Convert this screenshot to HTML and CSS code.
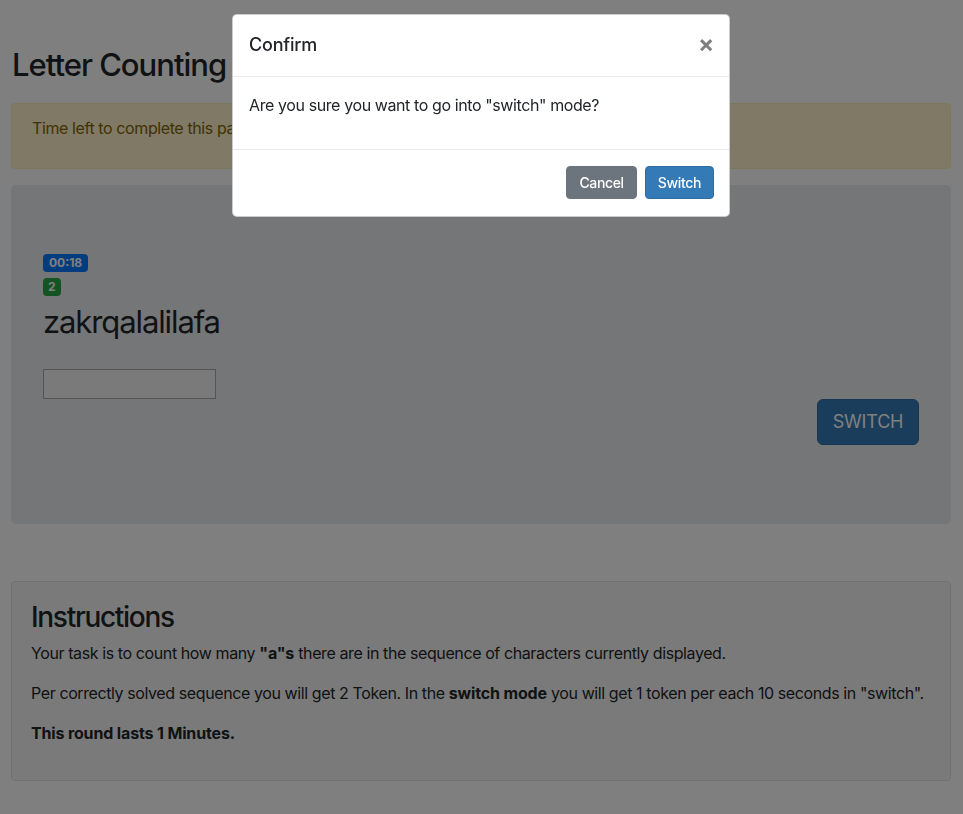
FILE: index.html
```html
<!DOCTYPE html>
<html lang="en">
<head>
<meta charset="utf-8">
<title>Letter Counting</title>
<link rel="stylesheet" href="styles.css">
</head>
<body>
<div class="page">
  <h1 class="title">Letter Counting</h1>
  <div class="alert">
    <p>Time left to complete this page: <span class="countdown">0:41</span></p>
  </div>
  <div class="jumbotron">
    <div class="task">
      <div class="task-main">
        <div class="badge-row"><span class="badge badge-blue">00:18</span></div>
        <div class="badge-row"><span class="badge badge-green">2</span></div>
        <div class="sequence">zakrqalalilafa</div>
        <input class="answer" type="text">
      </div>
      <div class="task-side">
        <button class="btn-switch-lg">SWITCH</button>
      </div>
    </div>
  </div>
  <div class="well">
    <h2 class="well-title">Instructions</h2>
    <p>Your task is to count how many <b>"a"s</b> there are in the sequence of characters currently displayed.</p>
    <p class="one-line">Per correctly solved sequence you will get 2 Token. In the <b>switch mode</b> you will get 1 token per each 10 seconds in "switch".</p>
    <p><b>This round lasts 1 Minutes.</b></p>
  </div>
</div>

<div class="backdrop"></div>
<div class="modal-wrap">
  <div class="modal">
    <div class="modal-header">
      <h5 class="modal-title">Confirm</h5>
      <span class="close">&times;</span>
    </div>
    <div class="modal-body">
      <p>Are you sure you want to go into "switch" mode?</p>
    </div>
    <div class="modal-footer">
      <button class="btn btn-secondary">Cancel</button>
      <button class="btn btn-primary">Switch</button>
    </div>
  </div>
</div>
</body>
</html>
```

FILE: styles.css
```css
* { box-sizing: border-box; }
html, body { margin: 0; padding: 0; }
body {
  font-family: Inter, "Noto Sans", sans-serif;
  font-size: 16px;
  line-height: 1.5;
  letter-spacing: -0.4px;
  color: #212529;
  background: #fff;
  width: 963px;
  height: 814px;
  overflow: hidden;
}
.page {
  padding: 46px 12px 0 11px;
}
.title {
  margin: 0 0 20px 1px;
  font-size: 31px;
  font-weight: 500;
  line-height: 1.2;
  letter-spacing: -1px;
}
.alert {
  background: #fff3cd;
  border: 1px solid #ffeeba;
  color: #856404;
  border-radius: 4px;
  padding: 12px 20px;
  margin-bottom: 16px;
}
.alert p { margin: 0 0 16px 0; }
.countdown { font-weight: 600; }
.jumbotron {
  background: #e9ecef;
  border-radius: 5px;
  padding: 64px 32px;
  height: 339px;
  margin-bottom: 57px;
}
.task { display: flex; justify-content: space-between; }
.badge-row { line-height: 24px; height: 24px; }
.badge {
  display: inline-block;
  font-size: 12px;
  font-weight: 700;
  line-height: 1;
  letter-spacing: 0;
  padding: 3px 6px;
  border-radius: 4px;
  color: #fff;
  vertical-align: middle;
}
.badge-blue { background: #007bff; }
.badge-green { background: #28a745; padding: 3px 5px; }
.sequence {
  font-size: 31px;
  line-height: 1.2;
  margin: 6px 0 29px 0;
  font-weight: 400;
  letter-spacing: -1.1px;
}
.answer {
  display: block;
  width: 173px;
  height: 30px;
  border: 1px solid #a9a9a9;
  background: #f5f5f5;
  margin: 0;
  padding: 2px 4px;
}
.task-side { padding-top: 150px; }
.btn-switch-lg {
  font-family: inherit;
  letter-spacing: -0.2px;
  background: #337ab7;
  border: 1px solid #2e6da4;
  color: #fff;
  font-size: 18px;
  line-height: 1.3333;
  padding: 10px 12px;
  border-radius: 6px;
  width: 102px;
  height: 46px;
}
.well {
  background: #f5f5f5;
  border: 1px solid #e3e3e3;
  border-radius: 4px;
  padding: 19px 19px 10px;
  height: 200px;
}
.well b { letter-spacing: -0.15px; }
.well-title {
  margin: 0 0 6px 0;
  font-size: 28px;
  font-weight: 500;
  line-height: 1.2;
  letter-spacing: -1.3px;
}
.well p { margin: 0 0 16px 0; }
.well .one-line { white-space: nowrap; }

.backdrop {
  position: fixed;
  inset: 0;
  background: rgba(0, 0, 0, 0.5);
}
.modal-wrap {
  position: fixed;
  top: 14px;
  left: 232px;
  width: 498px;
}
.modal {
  background: #fff;
  border: 1px solid rgba(0,0,0,.2);
  border-radius: 5px;
}
.modal-header {
  display: flex;
  align-items: flex-start;
  justify-content: space-between;
  padding: 15px 16px 16px;
  border-bottom: 1px solid #e9ecef;
}
.modal-title {
  margin: 0;
  font-size: 18px;
  font-weight: 500;
  line-height: 30px;
  letter-spacing: -0.2px;
}
.close {
  font-size: 24px;
  font-weight: 700;
  line-height: 30px;
  color: #000;
  opacity: .5;
  margin-right: -1px;
  margin-top: -1px;
}
.modal-body { padding: 16px; }
.modal-body p { margin: 0 0 16px 0; }
.modal-footer {
  display: flex;
  justify-content: flex-end;
  gap: 8px;
  padding: 16px 15px 17px 16px;
  border-top: 1px solid #e9ecef;
}
.btn {
  font-family: inherit;
  font-size: 14px;
  font-weight: 500;
  line-height: 19px;
  letter-spacing: -0.35px;
  padding: 6px 12px;
  border-radius: 4px;
  border: 1px solid transparent;
  color: #fff;
}
.btn-secondary { background: #6c757d; border-color: #6c757d; }
.btn-primary { background: #337ab7; border-color: #2e6da4; }
```
